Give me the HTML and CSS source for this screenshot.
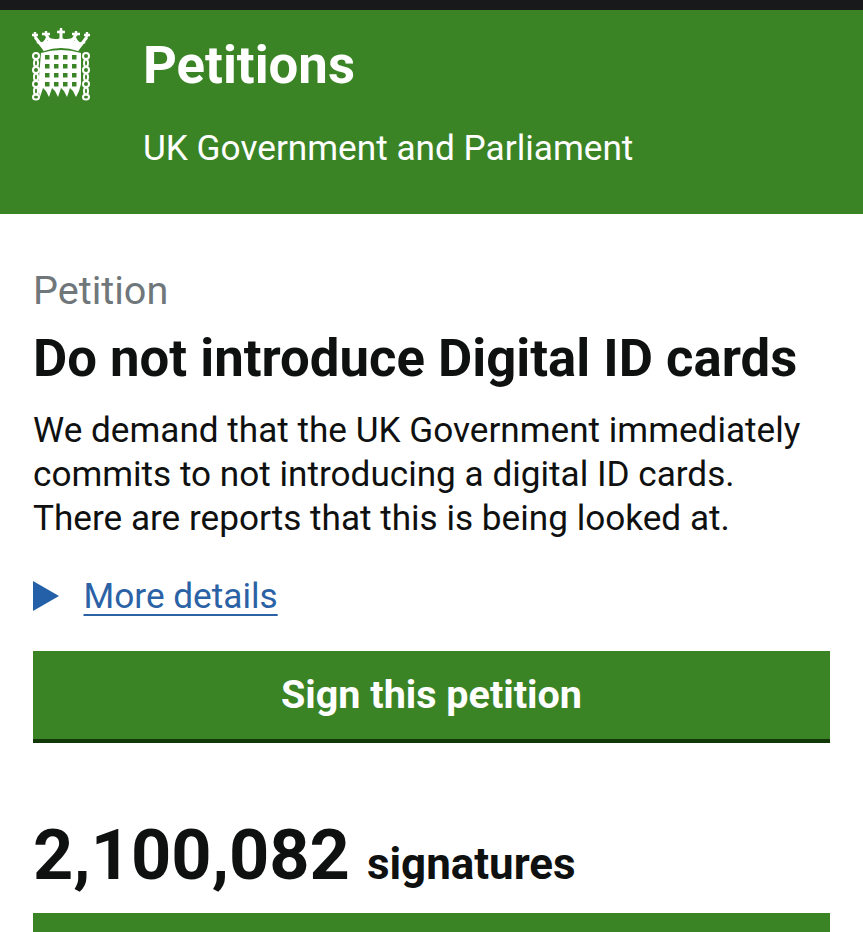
FILE: index.html
```html
<!DOCTYPE html>
<html lang="en">
<head>
<meta charset="utf-8">
<title>Petitions</title>
<link rel="stylesheet" href="styles.css">
</head>
<body>
<div class="statusbar"></div>
<header class="header">
  <svg class="logo" width="60" height="74" viewBox="0 0 60 74" aria-hidden="true">
    <g fill="none" stroke="#fff" stroke-width="3">
      <path d="M14 22L4 9M21 18L15 6M30 16V2M39 18L45 6M46 22L56 9"/>
      <path d="M1 7h6M4 4v5M11 6h8M15 3v5M26 4h8M30 0v5M41 6h8M45 3v5M53 7h6M56 4v5" stroke-width="2.400"/>
      <path d="M6 14q7 4 10-4q7 4 14 1q7 3 14-1q3 8 10 4" stroke-width="2.400"/>
    </g>
    <path fill="#fff" d="M9 15q21-8 42 0l-4 8q-17-6-34 0z"/>
    <path fill="#fff" fill-rule="evenodd" d="M10 25q20-6 40 0v31l-2 7-3 6-3-6-3-3-3 9-3-6-3-3-3 9-3-6-3-3-3 9-3-6-3-3-3 9-2-8zM14 27v4.500h4.500v-4.500zM23 27v4.500h4.500v-4.500zM32 27v4.500h4.500v-4.500zM41 27v4.500h4.500v-4.500zM14 36v4.500h4.500v-4.500zM23 36v4.500h4.500v-4.500zM32 36v4.500h4.500v-4.500zM41 36v4.500h4.500v-4.500zM14 45v4.500h4.500v-4.500zM23 45v4.500h4.500v-4.500zM32 45v4.500h4.500v-4.500zM41 45v4.500h4.500v-4.500zM14 54v4.500h4.500v-4.500zM23 54v4.500h4.500v-4.500zM32 54v4.500h4.500v-4.500zM41 54v4.500h4.500v-4.500z"/>
    <g fill="none" stroke="#fff" stroke-width="2">
      <ellipse cx="5" cy="28" rx="3" ry="3"/><ellipse cx="5" cy="35" rx="2" ry="3.500"/><ellipse cx="5" cy="42" rx="3" ry="3"/><ellipse cx="5" cy="49" rx="2" ry="3.500"/><ellipse cx="5" cy="56" rx="3" ry="3"/><ellipse cx="5" cy="63" rx="2" ry="3.500"/><ellipse cx="5" cy="69" rx="3" ry="2.600"/>
      <ellipse cx="55" cy="28" rx="3" ry="3"/><ellipse cx="55" cy="35" rx="2" ry="3.500"/><ellipse cx="55" cy="42" rx="3" ry="3"/><ellipse cx="55" cy="49" rx="2" ry="3.500"/><ellipse cx="55" cy="56" rx="3" ry="3"/><ellipse cx="55" cy="63" rx="2" ry="3.500"/><ellipse cx="55" cy="69" rx="3" ry="2.600"/>
    </g>
  </svg>
  <div class="brand">
    <div class="brand-title">Petitions</div>
    <div class="brand-sub">UK Government and Parliament</div>
  </div>
</header>
<main class="main">
  <p class="caption">Petition</p>
  <h1 class="title">Do not introduce Digital ID cards</h1>
  <p class="lede">We demand that the UK Government immediately commits to not introducing a digital ID cards.<br>There are reports that this is being looked at.</p>
  <div class="details">
    <span class="triangle"></span>
    <a class="details-link" href="#">More details</a>
  </div>
  <a class="button" href="#">Sign this petition</a>
  <p class="count"><span class="count-num">2,100,082</span> <span class="count-label">signatures</span></p>
  <div class="button button-next"></div>
</main>
</body>
</html>
```
FILE: styles.css
```css
* { box-sizing: border-box; }
html, body { margin: 0; padding: 0; }
body {
  width: 863px;
  height: 932px;
  overflow: hidden;
  background: #fff;
  color: #0f1010;
  font-family: Roboto, "Liberation Sans", sans-serif;
}
.statusbar { height: 10px; background: #17191a; }
.header {
  height: 204px;
  background: #3b8426;
  display: flex;
  align-items: flex-start;
  padding: 18px 0 0 31px;
  color: #fff;
}
.logo { flex: none; margin-right: 52px; filter: blur(0.4px); }
.brand-title { font-size: 52.700px; font-weight: 700; line-height: 59px; margin-top: 8px; }
.brand-sub { font-size: 35.200px; line-height: 40px; margin-top: 33px; }
.main { padding: 0 33px; }
.caption { margin: 54px 0 0; font-size: 39.600px; line-height: 46px; color: #6f777b; }
.title { margin: 14px 0 0; font-size: 52.700px; font-weight: 700; line-height: 60px; }
.lede { margin: 20px 0 0; font-size: 35.150px; line-height: 44px; }
.details { display: flex; align-items: center; margin-top: 34px; height: 44px; }
.triangle {
  width: 0; height: 0;
  border-left: 26px solid #2360a8;
  border-top: 15px solid transparent;
  border-bottom: 15px solid transparent;
  margin-right: 24.500px;
}
.details-link { font-size: 35.200px; line-height: 44px; color: #2b62a5; text-decoration: underline; text-decoration-thickness: 2px; text-underline-offset: 6px; }
.button {
  display: block;
  height: 92px;
  margin-top: 33px;
  background: #3b8426;
  border-bottom: 4px solid #12380a;
  color: #fff;
  font-size: 39.500px;
  font-weight: 700;
  line-height: 87px;
  text-align: center;
  text-decoration: none;
}
.count { margin: 77px 0 0; line-height: 70px; white-space: nowrap; }
.count-num { font-size: 70.300px; font-weight: 700; }
.count-label { font-size: 43.900px; font-weight: 700; margin-left: 13px; }
.button-next { margin-top: 4px; }
```
